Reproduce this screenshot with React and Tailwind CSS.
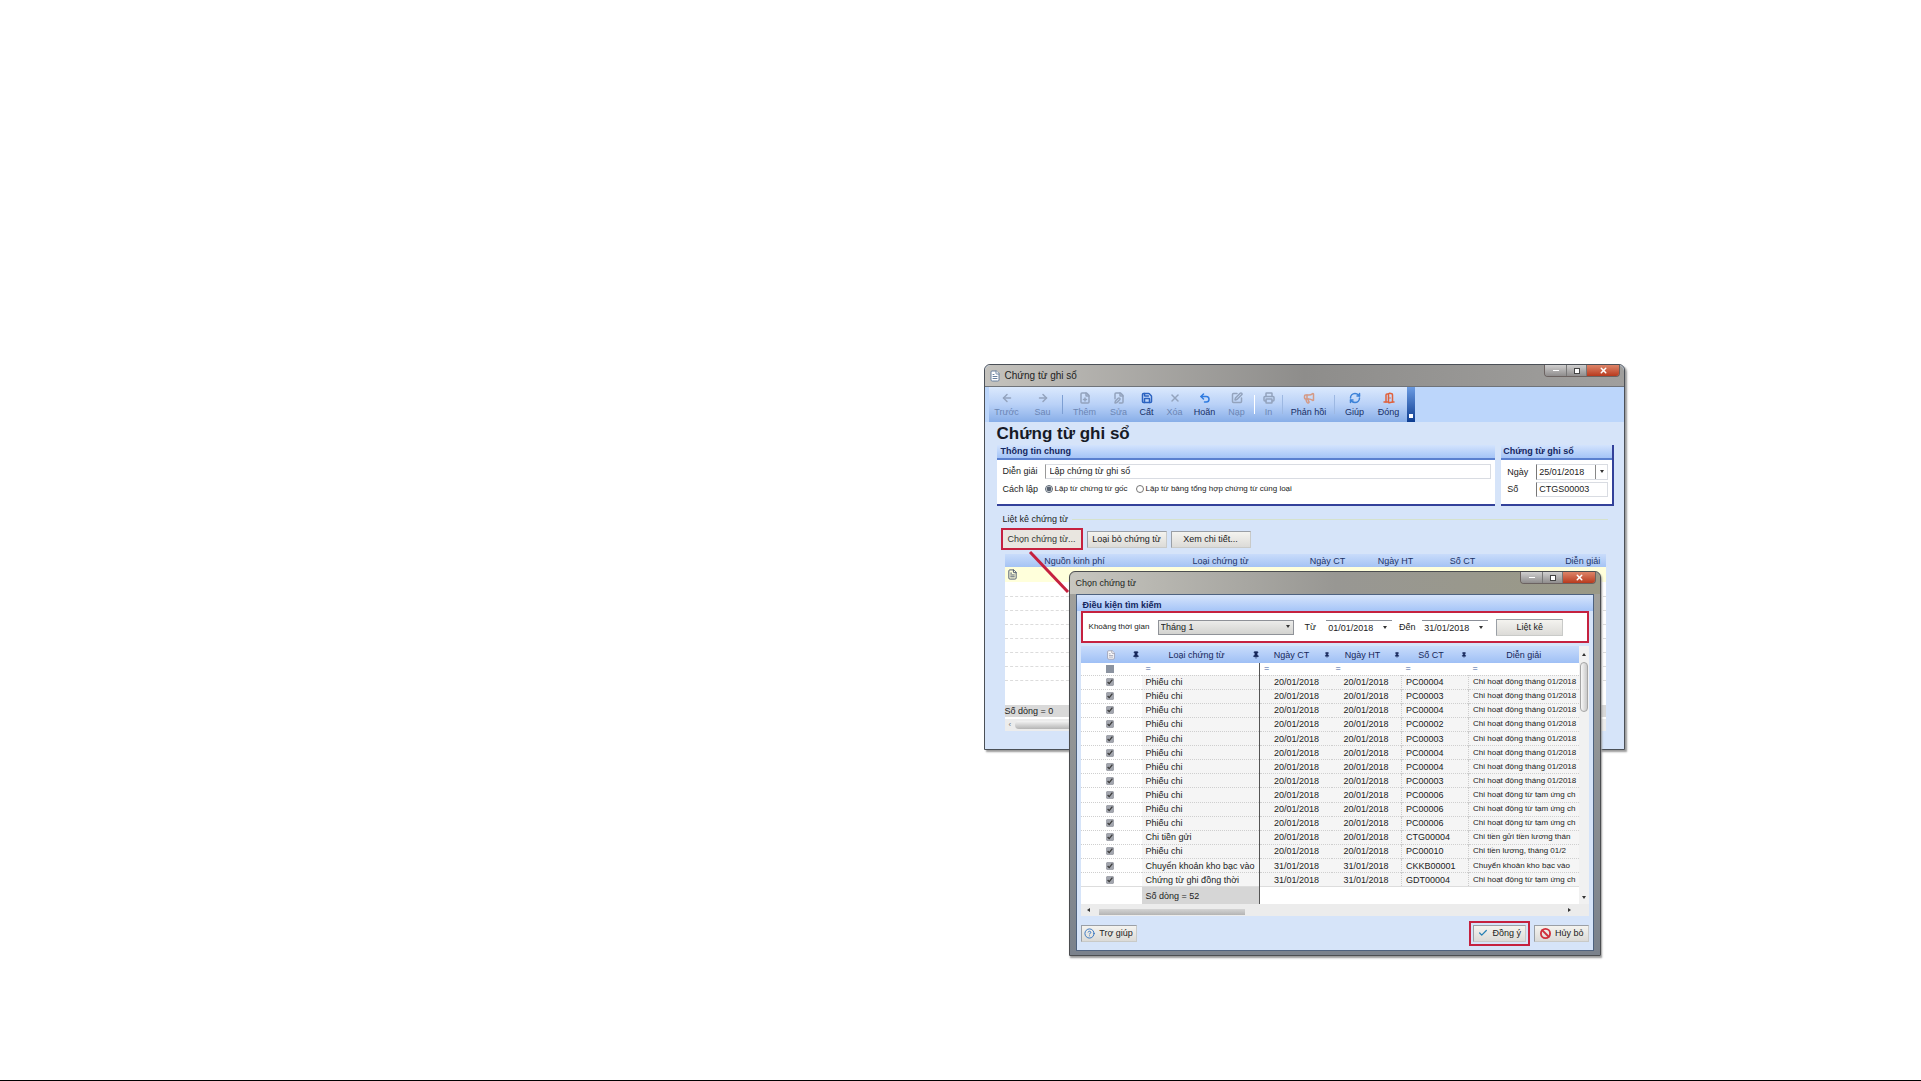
import React, { useState } from 'react';
import {
    ArrowLeft, ArrowRight, FilePlus, FilePen, Save, X, Undo2, SquarePen, Printer,
    Megaphone, RefreshCw, CircleHelp, DoorOpen, Check, Ban, FileText, Pin
} from 'lucide-react';

const toolbar = [
    { label: 'Trước', icon: ArrowLeft, width: 'w-9', off: true },
    { label: 'Sau', icon: ArrowRight, width: 'w-9', off: true },
    { sep: 'bg-[#7d9fd3]' },
    { label: 'Thêm', icon: FilePlus, width: 'w-10', off: true },
    { label: 'Sửa', icon: FilePen, width: 'w-7', off: true },
    { label: 'Cất', icon: Save, width: 'w-7', color: 'text-[#2b62c0]' },
    { label: 'Xóa', icon: X, width: 'w-7', off: true },
    { label: 'Hoãn', icon: Undo2, width: 'w-8', color: 'text-[#2f7be0]' },
    { label: 'Nạp', icon: SquarePen, width: 'w-8', off: true },
    { sep: 'bg-white' },
    { label: 'In', icon: Printer, width: 'w-6', off: true },
    { sep: 'bg-[#9db8e2]' },
    { label: 'Phản hồi', icon: Megaphone, width: 'w-12', color: 'text-[#d49a86]' },
    { sep: 'bg-[#9db8e2]' },
    { label: 'Giúp', icon: RefreshCw, width: 'w-9', color: 'text-[#3c82d8]' },
    { label: 'Đóng', icon: DoorOpen, width: 'w-8', color: 'text-[#e0613c]' },
];

const rows = [
    ['Phiếu chi', '20/01/2018', '20/01/2018', 'PC00004', 'Chi hoạt động tháng 01/2018'],
    ['Phiếu chi', '20/01/2018', '20/01/2018', 'PC00003', 'Chi hoạt động tháng 01/2018'],
    ['Phiếu chi', '20/01/2018', '20/01/2018', 'PC00004', 'Chi hoạt động tháng 01/2018'],
    ['Phiếu chi', '20/01/2018', '20/01/2018', 'PC00002', 'Chi hoạt động tháng 01/2018'],
    ['Phiếu chi', '20/01/2018', '20/01/2018', 'PC00003', 'Chi hoạt động tháng 01/2018'],
    ['Phiếu chi', '20/01/2018', '20/01/2018', 'PC00004', 'Chi hoạt động tháng 01/2018'],
    ['Phiếu chi', '20/01/2018', '20/01/2018', 'PC00004', 'Chi hoạt động tháng 01/2018'],
    ['Phiếu chi', '20/01/2018', '20/01/2018', 'PC00003', 'Chi hoạt động tháng 01/2018'],
    ['Phiếu chi', '20/01/2018', '20/01/2018', 'PC00006', 'Chi hoạt động từ tạm ứng ch'],
    ['Phiếu chi', '20/01/2018', '20/01/2018', 'PC00006', 'Chi hoạt động từ tạm ứng ch'],
    ['Phiếu chi', '20/01/2018', '20/01/2018', 'PC00006', 'Chi hoạt động từ tạm ứng ch'],
    ['Chi tiền gửi', '20/01/2018', '20/01/2018', 'CTG00004', 'Chi tiền gửi tiền lương thán'],
    ['Phiếu chi', '20/01/2018', '20/01/2018', 'PC00010', 'Chi tiền lương, tháng 01/2'],
    ['Chuyển khoản kho bạc vào', '31/01/2018', '31/01/2018', 'CKKB00001', 'Chuyển khoản kho bạc vào'],
    ['Chứng từ ghi đồng thời', '31/01/2018', '31/01/2018', 'GDT00004', 'Chi hoạt động từ tạm ứng ch'],
];

const TitleBar = ({ title, icon, className }) => (
    <div className={`flex justify-between text-[#222] ${className}`}>
        <div className="flex items-center gap-1">
            {icon}
            <span>{title}</span>
        </div>
        <div className="flex h-3 w-[76px] overflow-hidden rounded-b-sm border border-t-0 border-[#6b6260]">
            <button aria-label="Minimize" className="flex w-[21px] items-center justify-center bg-gradient-to-b from-[#d0cfcf] to-[#8f8d8d]">
                <span className="h-px w-1.5 bg-white" />
            </button>
            <button aria-label="Maximize" className="flex w-[20px] items-center justify-center border-l border-[#777] bg-gradient-to-b from-[#d0cfcf] to-[#8f8d8d]">
                <span className="size-1.5 border border-[#444] bg-white" />
            </button>
            <button aria-label="Close" className="flex flex-1 items-center justify-center border-l border-[#777] bg-gradient-to-b from-[#dd8468] to-[#b8391c] text-white">
                <X size={9} strokeWidth={4} />
            </button>
        </div>
    </div>
);

const Arrow = ({ className = '' }) => (
    <svg viewBox="0 0 6 4" className={`h-1 w-1.5 ${className}`}><path d="M1 0h4L3 3z" fill="#333" /></svg>
);

// Win7 style grey push button
const PushButton = ({ children, className = '' }) => (
    <button className={`flex items-center justify-center gap-1 whitespace-nowrap border border-[#c9cac8] border-t-[#9a9fa6] border-l-[#9a9fa6] bg-gradient-to-b from-[#f4f3ef] to-[#dcdbd8] text-[#222] ${className}`}>
        {children}
    </button>
);

const DateBox = ({ id, value, className }) => (
    <div className={`flex items-center border-t border-[#8b8f98] bg-white ${className}`}>
        <input id={id} defaultValue={value} className="w-0 flex-1 px-0.5 outline-none" />
        <Arrow className="mr-1" />
    </div>
);

const VoucherWindow = () => {
    const [source, setSource] = useState('goc');

    return (
        <section className="rounded-t-md border border-[#4b5057] bg-[#d6e4f9] shadow-[2px_2px_2px_#9a9a9a]">
            <TitleBar
                title="Chứng từ ghi sổ"
                icon={<FileText size={12} className="fill-white text-[#68809f]" />}
                className="h-[22px] rounded-t-md border-b border-[#6f7379] bg-gradient-to-r from-[#c4c2bd] via-[#8e8d8b] to-[#a09f9d] pl-1 pr-1 text-[10px]"
            />

            <div className="flex h-[35px] bg-[#bcd6fb] pl-1">
                <div className="flex bg-gradient-to-b from-[#dbe9fd] via-[#b9d1f7] to-[#88aee8]">
                    {toolbar.map((item, i) => item.sep ? (
                        <div key={i} className="flex w-1 justify-center py-2"><span className={`w-px ${item.sep}`} /></div>
                    ) : (
                        <button key={i} disabled={item.off} className={`flex flex-col items-center justify-center gap-0.5 ${item.width} ${item.off ? 'text-[#6c86b4]' : 'text-[#182f66]'}`}>
                            <item.icon size={12} strokeWidth={3} className={item.off ? 'text-[#93a3bd]' : item.color} />
                            <span className="whitespace-nowrap">{item.label}</span>
                        </button>
                    ))}
                    <div className="ml-0.5 flex w-2 items-end justify-center bg-gradient-to-b from-[#6b9be2] to-[#0d3d91] pb-1">
                        <span className="size-1 bg-white" />
                    </div>
                </div>
            </div>

            <div className="pt-1 pr-2.5 pl-3">
                <h1 className="h-[19px] text-[17px] leading-4 font-bold text-[#161a26]">Chứng từ ghi sổ</h1>

                <div className="flex gap-1.5">
                    <div className="flex-1 border-b-2 border-[#33419a] bg-white">
                        <h2 className="h-[15px] border-b-2 border-[#5a80cf] bg-gradient-to-b from-[#d3e3fd] to-[#a4c4f7] pl-1 leading-3 font-bold text-[#14265e]">Thông tin chung</h2>
                        <div className="flex h-11 flex-col justify-center gap-0.5 pr-1 pb-1 pl-1.5">
                            <div className="flex items-center">
                                <label htmlFor="dien-giai" className="w-[42px]">Diễn giải</label>
                                <input id="dien-giai" defaultValue="Lập chứng từ ghi sổ" className="h-[15px] w-0 flex-1 border border-[#d9dce2] border-l-[#999] px-1 outline-none" />
                            </div>
                            <div className="flex h-4 items-center">
                                <span className="w-[42px]">Cách lập</span>
                                <label className="mr-2 flex items-center gap-0.5 text-[8px]">
                                    <input type="radio" name="source" checked={source === 'goc'} onChange={() => setSource('goc')} className="size-2 accent-[#55606f]" />
                                    Lập từ chứng từ gốc
                                </label>
                                <label className="flex items-center gap-0.5 text-[8px]">
                                    <input type="radio" name="source" checked={source === 'bang'} onChange={() => setSource('bang')} className="size-2 accent-[#55606f]" />
                                    Lập từ bảng tổng hợp chứng từ cùng loại
                                </label>
                            </div>
                        </div>
                    </div>

                    <div className="w-[113px] border-r-2 border-b-2 border-[#33419a] bg-white">
                        <h2 className="h-[15px] border-b-2 border-[#5a80cf] bg-gradient-to-b from-[#d3e3fd] to-[#a4c4f7] pl-0.5 leading-3 font-bold text-[#14265e]">Chứng từ ghi sổ</h2>
                        <div className="flex h-11 flex-col justify-center gap-0.5 pr-1 pb-1 pl-1.5">
                            <div className="flex items-center">
                                <label htmlFor="ngay" className="w-[29px]">Ngày</label>
                                <div className="flex h-4 flex-1 items-center border border-[#d9dce2] border-l-[#777]">
                                    <input id="ngay" defaultValue="25/01/2018" className="w-0 flex-1 px-0.5 outline-none" />
                                    <button aria-label="Chọn ngày" className="flex h-full w-3 items-center justify-center border-l border-[#888]"><Arrow /></button>
                                </div>
                            </div>
                            <div className="flex items-center">
                                <label htmlFor="so" className="w-[29px]">Số</label>
                                <input id="so" defaultValue="CTGS00003" className="h-[15px] w-0 flex-1 border border-[#d9dce2] border-l-[#777] px-0.5 outline-none" />
                            </div>
                        </div>
                    </div>
                </div>

                <div className="mt-1.5 px-1.5">
                    <div className="flex h-3.5 items-center gap-1">
                        <span>Liệt kê chứng từ</span>
                        <span className="h-px flex-1 bg-[#d5e2cc]" />
                    </div>
                    <div className="mt-0.5 flex h-[22px] items-center gap-1">
                        <button className="-ml-0.5 h-[22px] w-[82px] border-2 border-[#c5213f] bg-[#e9e6e0] text-[#333]">Chọn chứng từ...</button>
                        <PushButton className="h-[17px] w-20">Loại bỏ chứng từ</PushButton>
                        <PushButton className="h-[17px] w-20">Xem chi tiết...</PushButton>
                    </div>
                </div>

                <div className="mx-2 mt-1 mb-[18px] bg-white">
                    <table className="w-full table-fixed">
                        <thead>
                            <tr className="h-[13px] bg-gradient-to-b from-[#c9dcfb] to-[#a5c3f4] leading-3 text-[#1d3468]">
                                <th className="w-[140px] p-0 font-normal">Nguồn kinh phí</th>
                                <th className="w-[152px] p-0 font-normal">Loại chứng từ</th>
                                <th className="w-[62px] p-0 font-normal">Ngày CT</th>
                                <th className="w-[74px] p-0 font-normal">Ngày HT</th>
                                <th className="w-[60px] p-0 font-normal">Số CT</th>
                                <th className="p-0 pr-1.5 text-right font-normal">Diễn giải</th>
                            </tr>
                        </thead>
                        <tbody>
                            <tr className="h-[15px] bg-[#ffffdb]"><td colSpan={6} className="p-0 pl-0.5"><FileText size={11} className="text-[#44506a]" /></td></tr>
                            {[0, 1, 2, 3, 4, 5, 6].map((i) => (
                                <tr key={i} className="h-3.5 border-b border-dashed border-[#dcdcdc]"><td colSpan={6} className="p-0" /></tr>
                            ))}
                        </tbody>
                    </table>
                    <div className="mt-6 h-3 w-full bg-[#d9d9d9] leading-3">Số dòng = 0</div>
                    <div className="mt-0.5 flex h-3 items-center gap-1 bg-[#ececec] pl-1 text-[8px] text-[#777]">‹ <span className="h-2 w-3/4 rounded-sm bg-gradient-to-b from-[#f4f4f4] to-[#b5b5b5]" /></div>
                </div>
            </div>
        </section>
    );
};

const PickerWindow = () => {
    const [checked, setChecked] = useState(rows.map(() => true));

    const toggle = (index) => {
        setChecked(checked.map((c, i) => (i === index ? !c : c)));
    };

    return (
        <section className="rounded-t-md border border-[#4b4d50] bg-gradient-to-b from-[#a3a29c] to-[#7b828c] px-1.5 pb-1 shadow-[1px_2px_2px_#999]">
            <TitleBar title="Chọn chứng từ" icon={null} className="-mx-1.5 h-[22px] rounded-t-md bg-gradient-to-r from-[#c7c6bf] via-[#989793] to-[#9a9986] pr-1 pl-1.5" />

            <div className="border border-[#4e627f] bg-[#d6e4f9] px-1">
                <h2 className="-mx-1 h-4 bg-gradient-to-b from-[#d6e4fb] to-[#a6c5f7] pl-1.5 leading-5 font-bold text-[#14265e]">Điều kiện tìm kiếm</h2>

                {/* Search range */}
                <div className="flex h-8 items-center border-2 border-[#c5213f] bg-white pr-6 pl-1.5">
                    <label htmlFor="khoang" className="w-[69px] text-[8px] whitespace-nowrap">Khoảng thời gian</label>
                    <div className="flex h-[15px] flex-1 items-center border border-[#8f9298] bg-gradient-to-b from-[#ececea] to-[#d3d3d0]">
                        <select id="khoang" defaultValue="1" className="w-0 flex-1 appearance-none pl-0.5 leading-3">
                            <option value="1">Tháng 1</option>
                        </select>
                        <Arrow className="mr-0.5" />
                    </div>
                    <label htmlFor="tu" className="w-8 text-center">Từ</label>
                    <DateBox id="tu" value="01/01/2018" className="h-[15px] w-[66px]" />
                    <label htmlFor="den" className="w-[30px] text-center">Đến</label>
                    <DateBox id="den" value="31/01/2018" className="h-[15px] w-[66px]" />
                    <PushButton className="ml-2 h-[17px] w-[67px]">Liệt kê</PushButton>
                </div>

                <div className="mt-[3px] flex h-[258px] bg-[#eaeef5]">
                    <table className="h-[258px] w-0 flex-1 table-fixed bg-[#f5f5f5]">
                        <thead>
                            <tr className="h-[17px] bg-gradient-to-b from-[#c9dcfb] to-[#9fc0f5] text-[#16275a]">
                                <th className="w-[61px] p-0 font-normal">
                                    <span className="flex items-center justify-end gap-4 pr-0.5"><FileText size={10} className="fill-white text-[#99a]" /><Pin size={8} className="fill-[#16275a]" /></span>
                                </th>
                                <th className="w-[118px] p-0 font-normal"><span className="flex items-center"><span className="flex-1">Loại chứng từ</span><Pin size={8} className="fill-[#16275a]" /></span></th>
                                <th className="w-[72px] p-0 font-normal"><span className="flex items-center"><span className="flex-1">Ngày CT</span><Pin size={6} className="mr-0.5 fill-[#16275a]" /></span></th>
                                <th className="w-[70px] p-0 font-normal"><span className="flex items-center"><span className="flex-1">Ngày HT</span><Pin size={6} className="mr-0.5 fill-[#16275a]" /></span></th>
                                <th className="w-[67px] p-0 font-normal"><span className="flex items-center"><span className="flex-1">Số CT</span><Pin size={6} className="mr-0.5 fill-[#16275a]" /></span></th>
                                <th className="p-0 font-normal">Diễn giải</th>
                            </tr>
                        </thead>
                        <tbody>
                            <tr className="h-3 bg-white leading-[11px] text-[#3d5a9b]">
                                <td className="p-0"><span className="ml-[25px] block size-2 bg-[#8b93a0]" /></td>
                                <td className="border-r border-[#555] p-0 pl-1">=</td>
                                <td className="p-0 pl-1">=</td>
                                <td className="p-0 pl-1">=</td>
                                <td className="p-0 pl-1">=</td>
                                <td className="p-0 pl-1">=</td>
                            </tr>
                            {rows.map((row, index) => (
                                <tr key={index} className="h-3.5 border-t border-dotted border-[#cfcfcf] leading-3 whitespace-nowrap text-[#222]">
                                    <td className="bg-white p-0">
                                        <input type="checkbox" aria-label={row[0]} checked={checked[index]} onChange={() => toggle(index)} className="ml-[25px] block size-2 accent-[#a3a6ae]" />
                                    </td>
                                    <td className="border-r border-[#555] p-0 pl-1">{row[0]}</td>
                                    <td className="p-0 pl-3.5">{row[1]}</td>
                                    <td className="border-r border-dotted border-[#ccc] p-0 pl-3">{row[2]}</td>
                                    <td className="border-r border-dotted border-[#ccc] p-0 pl-1">{row[3]}</td>
                                    <td className="p-0 pl-1 text-[8px]">{row[4]}</td>
                                </tr>
                            ))}
                            <tr className="h-[17px] border-t border-[#ddd] bg-white leading-3">
                                <td className="p-0" />
                                <td className="border-r border-[#555] bg-[#d6d6d6] p-0 pl-1">Số dòng = 52</td>
                                <td colSpan={4} className="p-0" />
                            </tr>
                        </tbody>
                    </table>
                    <div className="flex w-2.5 flex-col items-center bg-[#f1f1f1]">
                        <Arrow className="mt-1.5 rotate-180" />
                        <span className="mt-1.5 h-[50px] w-2 rounded-sm border border-[#a5a5a5] bg-gradient-to-r from-[#f8f8f8] to-[#c9c9c9]" />
                        <Arrow className="mt-auto mb-1" />
                    </div>
                </div>
                <div className="flex h-3 items-center gap-2 bg-[#ececec] px-1">
                    <Arrow className="rotate-90" />
                    <span className="mt-1 h-1.5 w-[146px] bg-gradient-to-b from-[#d4d4d4] to-[#b4b4b4]" />
                    <Arrow className="mr-3 ml-auto -rotate-90" />
                </div>

                <div className="flex h-[34px] items-center">
                    <PushButton className="h-[17px] w-14"><CircleHelp size={11} className="text-[#2d6fc0]" />Trợ giúp</PushButton>
                    <span className="ml-auto flex border-2 border-[#c5213f] p-0.5">
                        <PushButton className="h-[17px] w-[53px]"><Check size={10} strokeWidth={3} className="text-[#2780b4]" />Đồng ý</PushButton>
                    </span>
                    <PushButton className="ml-1 h-[17px] w-[55px]"><Ban size={11} strokeWidth={4} className="text-[#d0303c]" />Hủy bỏ</PushButton>
                </div>
            </div>
        </section>
    );
};

export default function App() {
    return (
        <main className="min-h-screen border-b border-black bg-white pt-[364px] font-['Liberation_Sans',sans-serif] text-[9px] leading-3 text-[#222]">
            {/* Desktop with the two overlapping windows */}
            <div className="relative ml-[51.2%] w-[33.4%] min-w-[600px]">
                <VoucherWindow />
                <svg className="absolute top-[187px] left-[44px] h-[44px] w-[42px]" viewBox="0 0 42 44"><path d="M2 1l38 40" stroke="#c5213f" strokeWidth="3" /></svg>
                <div className="absolute top-[207px] right-6 left-[85px]">
                    <PickerWindow />
                </div>
            </div>
        </main>
    );
}
